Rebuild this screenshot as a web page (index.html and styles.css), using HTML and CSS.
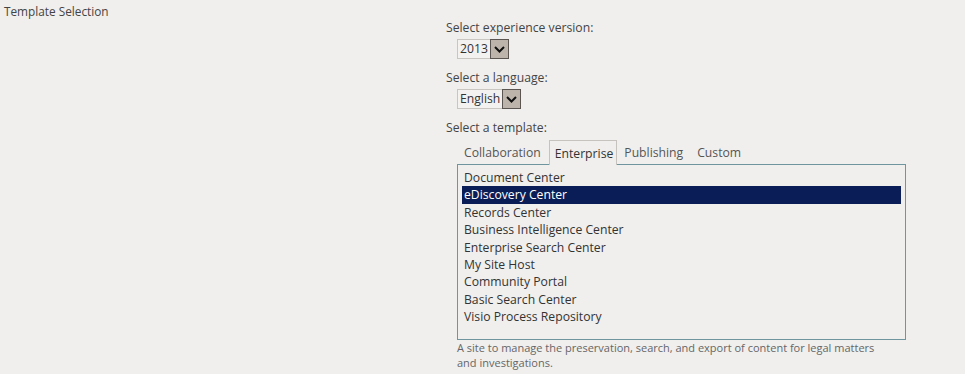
FILE: index.html
```html
<!DOCTYPE html>
<html>
<head>
<meta charset="utf-8">
<link rel="stylesheet" href="styles.css">
</head>
<body>
<div class="page">
  <div class="section-title">Template Selection</div>
  <div class="form">
    <div class="label">Select experience version:</div>
    <div class="field">
      <div class="select">
        <span class="value">2013</span>
        <span class="btn"><svg width="11" height="7" viewBox="0 0 11 7"><path d="M1 1 L5.5 5.5 L10 1" fill="none" stroke="#111" stroke-width="2"/></svg></span>
      </div>
    </div>
    <div class="label">Select a language:</div>
    <div class="field">
      <div class="select">
        <span class="value">English</span>
        <span class="btn"><svg width="11" height="7" viewBox="0 0 11 7"><path d="M1 1 L5.5 5.5 L10 1" fill="none" stroke="#111" stroke-width="2"/></svg></span>
      </div>
    </div>
    <div class="label">Select a template:</div>
    <div class="templates">
      <div class="tabs">
        <span class="tab">Collaboration</span>
        <span class="tab active">Enterprise</span>
        <span class="tab">Publishing</span>
        <span class="tab">Custom</span>
      </div>
      <div class="listbox">
        <div class="item">Document Center</div>
        <div class="item selected">eDiscovery Center</div>
        <div class="item">Records Center</div>
        <div class="item">Business Intelligence Center</div>
        <div class="item">Enterprise Search Center</div>
        <div class="item">My Site Host</div>
        <div class="item">Community Portal</div>
        <div class="item">Basic Search Center</div>
        <div class="item">Visio Process Repository</div>
      </div>
      <div class="desc">A site to manage the preservation, search, and export of content for legal matters and investigations.</div>
    </div>
  </div>
</div>
</body>
</html>
```
FILE: styles.css
```css
html, body {
  margin: 0;
  padding: 0;
  background: #f0efed;
}
body {
  font-family: "Open Sans", "Noto Sans", sans-serif;
  font-size: 12px;
  color: #444;
  width: 965px;
  height: 374px;
  overflow: hidden;
}
.page {
  display: flex;
  padding: 3px 0 0 4px;
}
.section-title {
  width: 442px;
  font-size: 11.8px;
  line-height: 17px;
  color: #444;
}
.form {
  display: flex;
  flex-direction: column;
  padding-top: 16px;
}
.label {
  font-size: 12.2px;
  line-height: 17px;
  color: #444;
}
.field {
  padding: 3px 0 0 11px;
  height: 30px;
}
.select {
  display: inline-flex;
  align-items: stretch;
  height: 20px;
  border: 1px solid #c9c6c2;
  box-sizing: border-box;
  background: #f3f2f0;
}
.select .value {
  font-size: 12.2px;
  line-height: 18px;
  padding: 0 2px 0 2px;
  color: #333;
}
.select .btn {
  width: 17px;
  margin: -1px -1px -1px 0;
  background: #bdb5ac;
  border: 1px solid #5a5550;
  display: flex;
  align-items: center;
  justify-content: center;
}
.templates {
  padding: 6px 0 0 11px;
}
.tabs {
  display: flex;
  height: 22px;
  align-items: flex-end;
  position: relative;
  z-index: 1;
}
.tab {
  font-size: 12.2px;
  line-height: 22px;
  padding: 0 6px;
  color: #555;
  border: 1px solid transparent;
  border-bottom: none;
}
.tab.active {
  color: #333;
  border-color: #c6c3bf;
  background: #f0efed;
  height: 23px;
  line-height: 23px;
  padding: 1px 3px 0 5px;
  margin: 0 0 -1px 1px;
}
.listbox {
  width: 449px;
  height: 176px;
  box-sizing: border-box;
  border: 1px solid #6f959f;
  padding: 4px 4px 3px;
}
.item {
  font-size: 12.2px;
  line-height: 17.4px;
  color: #333;
  padding-left: 2px;
}
.item.selected {
  background: #0b1d56;
  color: #fff;
}
.desc {
  width: 430px;
  font-size: 11px;
  line-height: 15px;
  color: #666;
  padding-top: 0;
}
```
